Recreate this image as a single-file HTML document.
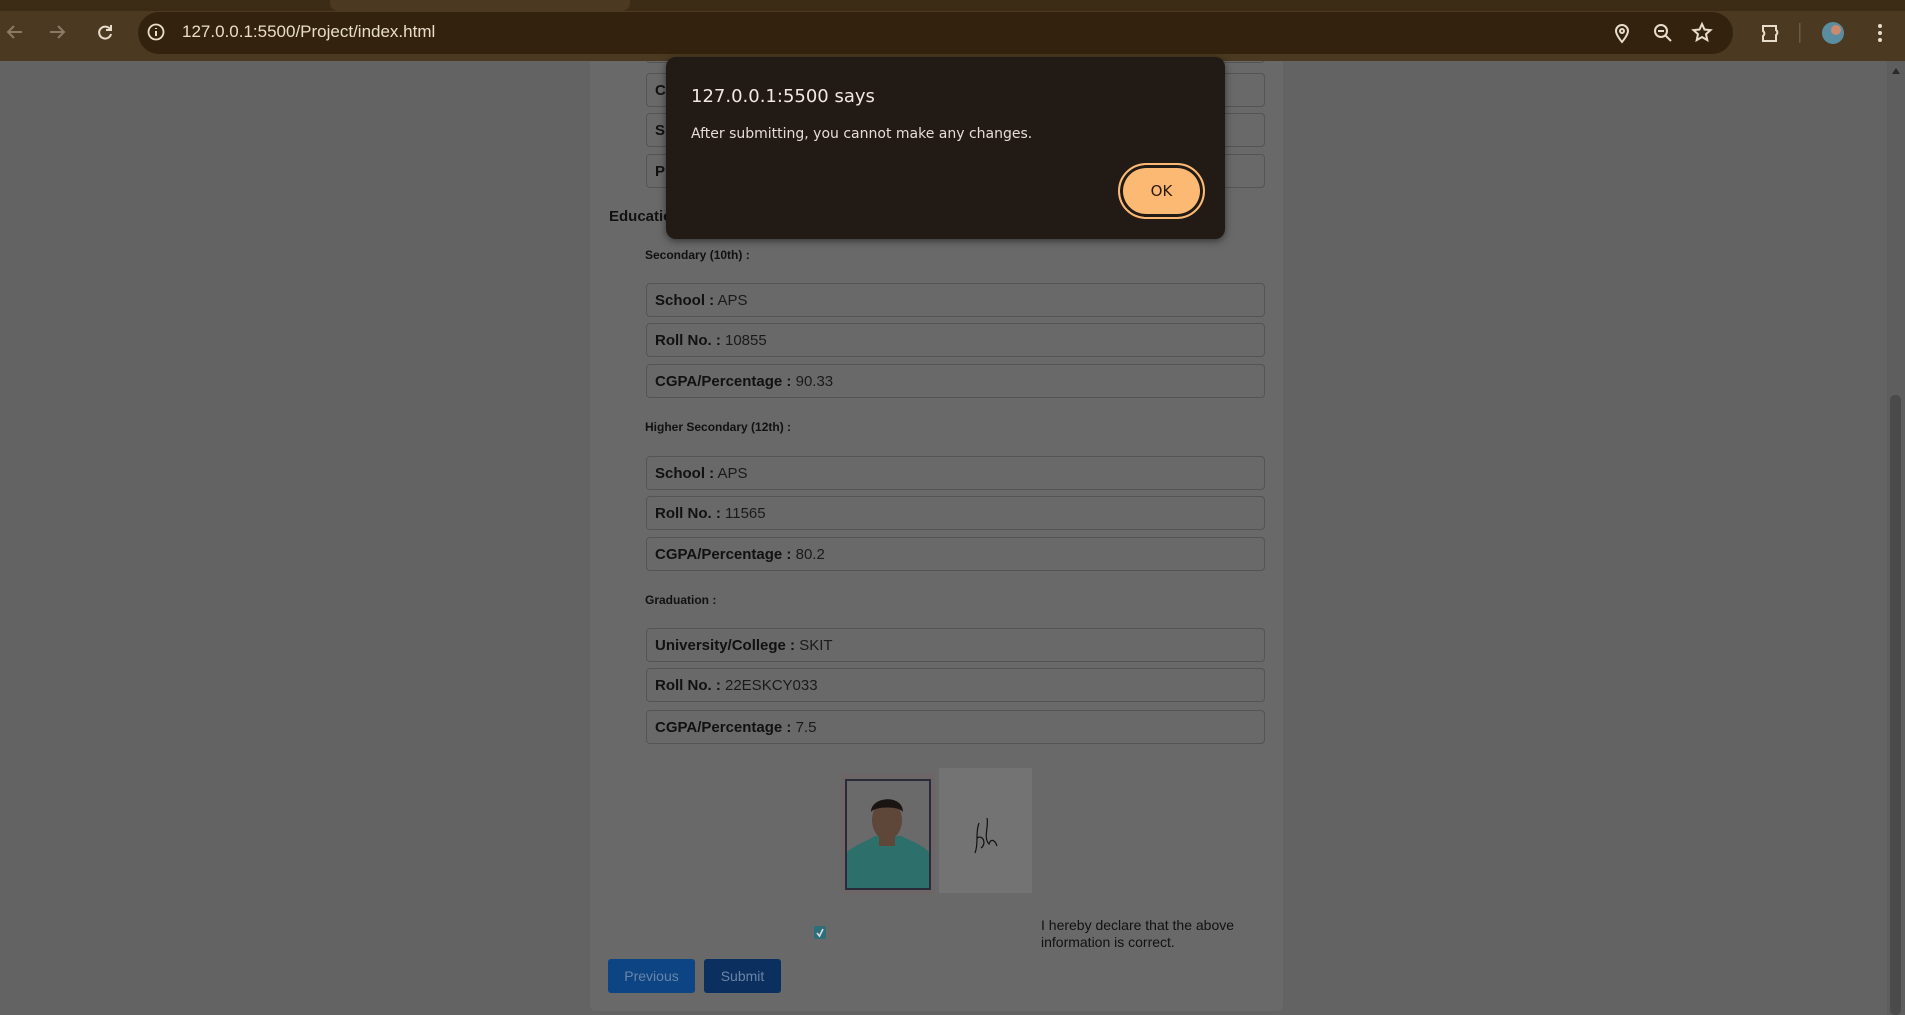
<!DOCTYPE html>
<html><head><meta charset="utf-8"><style>
*{margin:0;padding:0;box-sizing:border-box}
body{width:1905px;height:1015px;overflow:hidden;background:#636363;font-family:"Liberation Sans",Arial,sans-serif;position:relative}
.abs{position:absolute}
.tabs{left:0;top:0;width:1905px;height:11px;background:#3c2c15;z-index:10}
.toolbar{left:0;top:11px;width:1905px;height:50px;background:#4b3a21;z-index:10}
.pill{left:138px;top:12px;width:1595px;height:42px;border-radius:21px;background:#33230e;z-index:11}
.url{left:182px;top:22px;color:#e8dccb;font-size:17px;z-index:12}
.card{left:590px;top:61px;width:693px;height:950px;background:#696969;border-radius:0 0 6px 6px}
.f{position:absolute;left:646px;width:619px;height:34px;border:1px solid #545454;border-radius:4px;background:#696969;font-size:15px;color:#1a1a1a;padding:8px 0 0 8px}
.f b{color:#111}
.h{position:absolute;left:645px;font-size:12px;font-weight:bold;color:#111}
.btn{position:absolute;top:959px;height:34px;border-radius:3px;color:#6a84a8;font-size:14px;text-align:center;line-height:34px}
.dlg{left:666px;top:57px;width:559px;height:182px;background:#221a15;border-radius:10px;box-shadow:0 2px 8px rgba(0,0,0,.5);z-index:20}
.scroll{left:1887px;top:61px;width:18px;height:954px;background:#5e5e5e}
.top{z-index:21}
</style></head><body>
<div class="abs tabs"></div>
<div class="abs" style="left:330px;top:0;width:300px;height:11px;background:#4b3a21;border-radius:0 0 8px 8px;z-index:11"></div>
<div class="abs toolbar"></div>
<div class="abs pill"></div>
<svg class="abs" style="left:0;top:17px;z-index:12" width="120" height="30" viewBox="0 0 120 30">
<g stroke="#8a7a66" stroke-width="2" fill="none"><path d="M22 15H8M14 9l-6 6 6 6"/><path d="M50 15h14M58 9l6 6-6 6"/></g>
<g stroke="#e8dccb" stroke-width="2" fill="none"><path d="M110 12a6 6 0 1 0 1 5"/><path d="M111 8v5h-5"/></g>
</svg>
<svg class="abs" style="left:146px;top:22px;z-index:12" width="20" height="20"><circle cx="10" cy="10" r="7.5" stroke="#e8dccb" stroke-width="1.8" fill="none"/><path d="M10 9v5M10 6v1" stroke="#e8dccb" stroke-width="2"/></svg>
<div class="abs url">127.0.0.1:5500/Project/index.html</div>
<svg class="abs" style="left:1608px;top:20px;z-index:12" width="290" height="26" viewBox="0 0 290 26">
<g stroke="#e8dccb" stroke-width="2" fill="none">
<path d="M14 22s-6-7-6-11a6 6 0 0 1 12 0c0 4-6 11-6 11z"/><circle cx="14" cy="11" r="2"/>
<circle cx="53" cy="11" r="6"/><path d="M57 15l6 6M50 11h6"/>
<path d="M94 4l2.5 5.5 6 .6-4.5 4 1.3 6-5.3-3.1-5.3 3.1 1.3-6-4.5-4 6-.6z"/>
<path d="M160 6h8v4a3 3 0 0 1 0 5v6h-13v-5a3 3 0 0 0 0-5V6z"/>
</g>
<rect x="191" y="3" width="1.5" height="20" fill="#6b5a44"/>
<circle cx="225" cy="13" r="11" fill="#5b8da0"/><circle cx="228" cy="10" r="5" fill="#c98a6e"/>
<g fill="#e8dccb"><circle cx="272" cy="6" r="2"/><circle cx="272" cy="13" r="2"/><circle cx="272" cy="20" r="2"/></g>
</svg>
<div class="abs scroll"></div>
<div class="abs" style="left:1890px;top:395px;width:11px;height:620px;background:#4a4a4a;border-radius:5px"></div>
<svg class="abs" style="left:1890px;top:66px" width="12" height="10"><path d="M6 2l4 6H2z" fill="#2a2a2a"/></svg>
<div class="abs card"></div>
<div class="f" style="top:40px;height:23px"></div>
<div class="f" style="top:73px"><b>C</b></div>
<div class="f" style="top:113px"><b>S</b></div>
<div class="f" style="top:154px"><b>P</b></div>
<div class="abs" style="left:609px;top:208px;font-size:15px;font-weight:bold;color:#111">Education Details :</div>
<div class="h" style="top:248px">Secondary (10th) :</div>
<div class="f" style="top:283px"><b>School :</b> APS</div>
<div class="f" style="top:323px"><b>Roll No. :</b> 10855</div>
<div class="f" style="top:364px"><b>CGPA/Percentage :</b> 90.33</div>
<div class="h" style="top:420px">Higher Secondary (12th) :</div>
<div class="f" style="top:456px"><b>School :</b> APS</div>
<div class="f" style="top:496px"><b>Roll No. :</b> 11565</div>
<div class="f" style="top:537px"><b>CGPA/Percentage :</b> 80.2</div>
<div class="h" style="top:593px">Graduation :</div>
<div class="f" style="top:628px"><b>University/College :</b> SKIT</div>
<div class="f" style="top:668px"><b>Roll No. :</b> 22ESKCY033</div>
<div class="f" style="top:710px"><b>CGPA/Percentage :</b> 7.5</div>
<svg class="abs" style="left:841px;top:774px" width="94" height="120" viewBox="0 0 94 120">
<rect width="94" height="120" fill="#6e6666"/><rect x="4" y="5" width="86" height="111" fill="#2a2b3a"/>
<rect x="6" y="7" width="82" height="107" fill="#6a6a6a"/>
<path d="M6 114V78c10-8 22-12 28-16h26c8 4 20 8 28 16v36z" fill="#2d6f6b"/>
<ellipse cx="46" cy="46" rx="15" ry="20" fill="#5e4638"/><path d="M30 38c0-16 32-18 32 0-4-6-28-6-32 0z" fill="#1a1412"/>
<rect x="38" y="62" width="16" height="10" fill="#5e4638"/>
</svg>
<svg class="abs" style="left:939px;top:768px" width="93" height="125" viewBox="0 0 93 125">
<rect width="93" height="125" fill="#737373"/>
<path d="M40 55c-4 10 0 20-4 30M38 70c6-4 10 6 4 10M48 50c2 8-4 20 2 26 2-6 6-4 8 2" stroke="#111" stroke-width="1.2" fill="none"/>
</svg>
<div class="abs" style="left:814px;top:926px;width:12px;height:13px;background:#2c6f7a;border-radius:2px"></div>
<svg class="abs" style="left:815px;top:927px" width="10" height="11"><path d="M2 6l2.5 3L8 2" stroke="#ddd" stroke-width="1.6" fill="none"/></svg>
<div class="abs" style="left:1041px;top:917px;font-size:14px;color:#111;line-height:17px">I hereby declare that the above<br>information is correct.</div>
<div class="btn" style="left:608px;width:87px;background:#0d4484">Previous</div>
<div class="btn" style="left:704px;width:77px;background:#0b2f5e">Submit</div>
<div class="abs dlg"></div>
<div class="abs top" style="left:691px;top:86px;font-size:18px;color:#f1e8df;font-family:'DejaVu Sans',sans-serif">127.0.0.1:5500 says</div>
<div class="abs top" style="left:691px;top:126px;font-size:14px;color:#e6ddd4;font-family:'DejaVu Sans',sans-serif">After submitting, you cannot make any changes.</div>
<div class="abs top" style="left:1118px;top:163px;width:87px;height:56px;border-radius:28px;background:#fbb973;border:2px solid #fbb973;box-shadow:inset 0 0 0 3px #221a15"></div>
<div class="abs top" style="left:1118px;top:163px;width:87px;height:56px;line-height:56px;text-align:center;font-size:15px;color:#2a1a0a;font-family:'DejaVu Sans',sans-serif">OK</div>
</body></html>
